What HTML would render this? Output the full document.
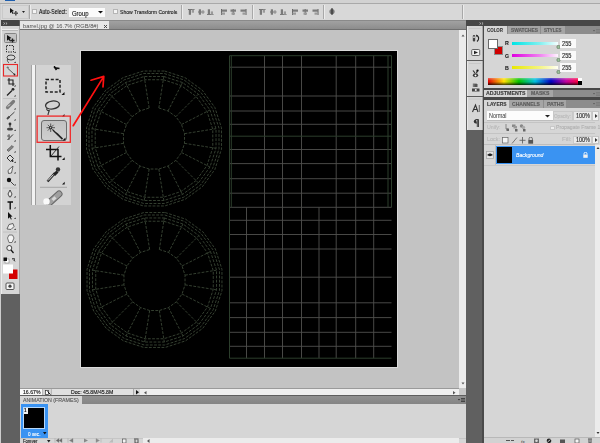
<!DOCTYPE html>
<html><head><meta charset="utf-8">
<style>
*{margin:0;padding:0;box-sizing:border-box}
html,body{width:600px;height:443px;overflow:hidden;background:#d5d5d5;font-family:"Liberation Sans",sans-serif;position:relative}
.a{position:absolute}
.t{position:absolute;white-space:nowrap;line-height:1;transform-origin:0 0;-webkit-text-stroke:0.12px currentColor}
</style></head><body>
<!-- top app bar -->
<div class="a" style="left:0;top:0;width:600px;height:3px;background:#d2d2d2"></div>
<div class="a" style="left:5px;top:0;width:10px;height:1px;background:#1f5fae"></div>
<div class="a" style="left:0;top:3px;width:600px;height:1px;background:#a9a9a9"></div>
<!-- options bar -->
<div class="a" style="left:0;top:4px;width:600px;height:16px;background:#d8d8d8;border-left:1px solid #b8c4cc"></div>
<div class="a" style="left:2px;top:5px;width:27px;height:14px;border:1px solid #c9c9c9"></div>
<svg class="a" style="left:9px;top:7px" width="11" height="10" viewBox="9 7 11 10"><path d="M10 8L14 11L12.3 11.6L13.5 13.6L12.6 14L11.5 12.1L10 13.3Z" fill="#111"/><path d="M15.8 11V15.5M13.5 13.2H18" stroke="#555" stroke-width="1.6"/></svg>
<svg class="a" style="left:22px;top:11px" width="4" height="3"><path d="M0 0H3L1.5 2Z" fill="#222"/></svg>
<div class="a" style="left:29px;top:5px;width:1px;height:14px;background:#a8a8a8"></div>
<div class="a" style="left:30px;top:5px;width:1px;height:14px;background:#ececec"></div>
<div class="a" style="left:32px;top:9px;width:5px;height:5px;background:#f4f4f4;border:1px solid #b5b5b5"></div>
<div class="a" style="left:69px;top:8px;width:36px;height:9px;background:#fbfbfb"></div>
<svg class="a" style="left:98px;top:11px" width="5" height="3"><path d="M0 0H5L2.5 2.6Z" fill="#111"/></svg>
<div class="a" style="left:113px;top:9px;width:5px;height:5px;background:#f4f4f4;border:1px solid #b5b5b5"></div>
<div class="a" style="left:181px;top:5px;width:1px;height:14px;background:#a8a8a8"></div>
<div class="a" style="left:182px;top:5px;width:1px;height:14px;background:#ececec"></div>
<div class="a" style="left:252px;top:5px;width:1px;height:14px;background:#a8a8a8"></div>
<div class="a" style="left:253px;top:5px;width:1px;height:14px;background:#ececec"></div>
<div class="a" style="left:323px;top:5px;width:1px;height:14px;background:#a8a8a8"></div>
<div class="a" style="left:324px;top:5px;width:1px;height:14px;background:#ececec"></div>
<div class="a" style="left:462px;top:5px;width:1px;height:14px;background:#a8a8a8"></div>
<div class="a" style="left:463px;top:5px;width:1px;height:14px;background:#ececec"></div>
<svg class="a" style="left:188px;top:8.5px" width="7" height="6.5" viewBox="0 0 7 6.5"><path d="M0 0.5H6.5" stroke="#666" stroke-width="0.9"/><rect x="0.8" y="0.5" width="2.2" height="5.3" fill="#7a7a7a"/><rect x="3.8" y="0.5" width="2.2" height="3.2" fill="#9a9a9a"/></svg>
<svg class="a" style="left:197.5px;top:8.5px" width="7" height="6.5" viewBox="0 0 7 6.5"><path d="M0 3H6.5" stroke="#666" stroke-width="0.9"/><rect x="0.8" y="0.3" width="2.2" height="5.4" fill="#7a7a7a"/><rect x="3.8" y="1.4" width="2.2" height="3.2" fill="#9a9a9a"/></svg>
<svg class="a" style="left:207px;top:8.5px" width="7" height="6.5" viewBox="0 0 7 6.5"><path d="M0 5.6H6.5" stroke="#666" stroke-width="0.9"/><rect x="0.8" y="0.3" width="2.2" height="5.3" fill="#7a7a7a"/><rect x="3.8" y="2.4" width="2.2" height="3.2" fill="#9a9a9a"/></svg>
<svg class="a" style="left:221px;top:8.5px" width="7" height="6.5" viewBox="0 0 7 6.5"><path d="M0.5 0V6" stroke="#555" stroke-width="0.9"/><rect x="0.5" y="0.5" width="5.5" height="2.2" fill="#7a7a7a"/><rect x="0.5" y="3.5" width="3.5" height="2.2" fill="#9a9a9a"/></svg>
<svg class="a" style="left:230px;top:8.5px" width="7" height="6.5" viewBox="0 0 7 6.5"><path d="M3.2 0V6" stroke="#555" stroke-width="0.9"/><rect x="0.5" y="0.5" width="5.5" height="2.2" fill="#7a7a7a"/><rect x="1.5" y="3.5" width="3.5" height="2.2" fill="#9a9a9a"/></svg>
<svg class="a" style="left:240px;top:8.5px" width="7" height="6.5" viewBox="0 0 7 6.5"><path d="M6 0V6" stroke="#555" stroke-width="0.9"/><rect x="0.5" y="0.5" width="5.5" height="2.2" fill="#7a7a7a"/><rect x="2.5" y="3.5" width="3.5" height="2.2" fill="#9a9a9a"/></svg>
<svg class="a" style="left:259px;top:8.5px" width="7" height="6.5" viewBox="0 0 7 6.5"><path d="M0 0.5H6.5" stroke="#666" stroke-width="0.9"/><rect x="0.8" y="0.5" width="2.2" height="5.3" fill="#7a7a7a"/><rect x="3.8" y="0.5" width="2.2" height="3.2" fill="#9a9a9a"/></svg>
<svg class="a" style="left:270px;top:8.5px" width="7" height="6.5" viewBox="0 0 7 6.5"><path d="M0 3H6.5" stroke="#666" stroke-width="0.9"/><rect x="0.8" y="0.3" width="2.2" height="5.4" fill="#7a7a7a"/><rect x="3.8" y="1.4" width="2.2" height="3.2" fill="#9a9a9a"/></svg>
<svg class="a" style="left:280px;top:8.5px" width="7" height="6.5" viewBox="0 0 7 6.5"><path d="M0 5.6H6.5" stroke="#666" stroke-width="0.9"/><rect x="0.8" y="0.3" width="2.2" height="5.3" fill="#7a7a7a"/><rect x="3.8" y="2.4" width="2.2" height="3.2" fill="#9a9a9a"/></svg>
<svg class="a" style="left:292px;top:8.5px" width="7" height="6.5" viewBox="0 0 7 6.5"><path d="M0.5 0V6" stroke="#555" stroke-width="0.9"/><rect x="0.5" y="0.5" width="5.5" height="2.2" fill="#7a7a7a"/><rect x="0.5" y="3.5" width="3.5" height="2.2" fill="#9a9a9a"/></svg>
<svg class="a" style="left:302px;top:8.5px" width="7" height="6.5" viewBox="0 0 7 6.5"><path d="M3.2 0V6" stroke="#555" stroke-width="0.9"/><rect x="0.5" y="0.5" width="5.5" height="2.2" fill="#7a7a7a"/><rect x="1.5" y="3.5" width="3.5" height="2.2" fill="#9a9a9a"/></svg>
<svg class="a" style="left:312px;top:8.5px" width="7" height="6.5" viewBox="0 0 7 6.5"><path d="M6 0V6" stroke="#555" stroke-width="0.9"/><rect x="0.5" y="0.5" width="5.5" height="2.2" fill="#7a7a7a"/><rect x="2.5" y="3.5" width="3.5" height="2.2" fill="#9a9a9a"/></svg>
<svg class="a" style="left:329px;top:8px" width="6" height="7" viewBox="0 0 6 7"><circle cx="3" cy="3.5" r="2.6" fill="#777"/><path d="M3 0V7" stroke="#222"/></svg>

<!-- tab bar -->
<div class="a" style="left:20px;top:20px;width:447px;height:10px;background:linear-gradient(#a4a4a4,#8a8a8a)"></div>
<div class="a" style="left:20px;top:20px;width:447px;height:1px;background:#8a8a8a"></div>
<div class="a" style="left:20px;top:20.5px;width:89px;height:8.5px;background:#e6e6e6"></div>
<div class="a" style="left:20px;top:29px;width:447px;height:1px;background:#707070"></div>

<!-- canvas -->
<div class="a" style="left:20px;top:30px;width:439px;height:358px;background:#c3c3c3"></div>
<div class="a" style="left:80px;top:50px;width:318px;height:318px;background:#dadada"></div>
<div class="a" style="left:81px;top:51px;width:316px;height:316px;background:#000"><svg width="316" height="316" viewBox="0 0 316 316" style="filter:blur(0.35px)"><style>.w{fill:none;stroke:#3a4636;stroke-width:0.9;stroke-dasharray:2.8 1.4}.g{stroke:#50504e;stroke-width:0.9}.s{stroke:#2c3e2c;stroke-width:1}</style><polygon points="83.68,20.04 104.01,26.64 121.3,39.2 133.86,56.49 140.46,76.82 140.46,98.18 133.86,118.51 121.3,135.8 104.01,148.36 83.68,154.96 62.32,154.96 41.99,148.36 24.7,135.8 12.14,118.51 5.54,98.18 5.54,76.82 12.14,56.49 24.7,39.2 41.99,26.64 62.32,20.04" class="w"/>
<polygon points="83.29,22.51 102.87,28.87 119.53,40.97 131.63,57.63 137.99,77.21 137.99,97.79 131.63,117.37 119.53,134.03 102.87,146.13 83.29,152.49 62.71,152.49 43.13,146.13 26.47,134.03 14.37,117.37 8.01,97.79 8.01,77.21 14.37,57.63 26.47,40.97 43.13,28.87 62.71,22.51" class="w"/>
<polygon points="82.82,25.47 101.51,31.54 117.41,43.09 128.96,58.99 135.03,77.68 135.03,97.32 128.96,116.01 117.41,131.91 101.51,143.46 82.82,149.53 63.18,149.53 44.49,143.46 28.59,131.91 17.04,116.01 10.97,97.32 10.97,77.68 17.04,58.99 28.59,43.09 44.49,31.54 63.18,25.47" class="w"/>
<polygon points="82.31,28.73 100.01,34.49 115.07,45.43 126.01,60.49 131.77,78.19 131.77,96.81 126.01,114.51 115.07,129.57 100.01,140.51 82.31,146.27 63.69,146.27 45.99,140.51 30.93,129.57 19.99,114.51 14.23,96.81 14.23,78.19 19.99,60.49 30.93,45.43 45.99,34.49 63.69,28.73" class="w"/>
<polyline points="77.83,56.98 87.03,59.97 94.85,65.65 100.53,73.47 103.52,82.67 103.52,92.33 100.53,101.53 94.85,109.35 87.03,115.03 77.83,118.02 68.17,118.02 58.97,115.03 51.15,109.35 45.47,101.53 42.48,92.33 42.48,82.67 45.47,73.47 51.15,65.65 58.97,59.97 68.17,56.98" class="w"/>
<line x1="77.83" y1="56.98" x2="82.82" y2="25.47" class="w"/>
<line x1="87.03" y1="59.97" x2="101.51" y2="31.54" class="w"/>
<line x1="94.85" y1="65.65" x2="117.41" y2="43.09" class="w"/>
<line x1="100.53" y1="73.47" x2="128.96" y2="58.99" class="w"/>
<line x1="103.52" y1="82.67" x2="135.03" y2="77.68" class="w"/>
<line x1="103.52" y1="92.33" x2="135.03" y2="97.32" class="w"/>
<line x1="100.53" y1="101.53" x2="128.96" y2="116.01" class="w"/>
<line x1="94.85" y1="109.35" x2="117.41" y2="131.91" class="w"/>
<line x1="87.03" y1="115.03" x2="101.51" y2="143.46" class="w"/>
<line x1="77.83" y1="118.02" x2="82.82" y2="149.53" class="w"/>
<line x1="68.17" y1="118.02" x2="63.18" y2="149.53" class="w"/>
<line x1="58.97" y1="115.03" x2="44.49" y2="143.46" class="w"/>
<line x1="51.15" y1="109.35" x2="28.59" y2="131.91" class="w"/>
<line x1="45.47" y1="101.53" x2="17.04" y2="116.01" class="w"/>
<line x1="42.48" y1="92.33" x2="10.97" y2="97.32" class="w"/>
<line x1="42.48" y1="82.67" x2="10.97" y2="77.68" class="w"/>
<line x1="45.47" y1="73.47" x2="17.04" y2="58.99" class="w"/>
<line x1="51.15" y1="65.65" x2="28.59" y2="43.09" class="w"/>
<line x1="58.97" y1="59.97" x2="44.49" y2="31.54" class="w"/>
<line x1="68.17" y1="56.98" x2="63.18" y2="25.47" class="w"/><polygon points="84.18,161.54 104.51,168.14 121.8,180.7 134.36,197.99 140.96,218.32 140.96,239.68 134.36,260.01 121.8,277.3 104.51,289.86 84.18,296.46 62.82,296.46 42.49,289.86 25.2,277.3 12.64,260.01 6.04,239.68 6.04,218.32 12.64,197.99 25.2,180.7 42.49,168.14 62.82,161.54" class="w"/>
<polygon points="83.79,164.01 103.37,170.37 120.03,182.47 132.13,199.13 138.49,218.71 138.49,239.29 132.13,258.87 120.03,275.53 103.37,287.63 83.79,293.99 63.21,293.99 43.63,287.63 26.97,275.53 14.87,258.87 8.51,239.29 8.51,218.71 14.87,199.13 26.97,182.47 43.63,170.37 63.21,164.01" class="w"/>
<polygon points="83.32,166.97 102.01,173.04 117.91,184.59 129.46,200.49 135.53,219.18 135.53,238.82 129.46,257.51 117.91,273.41 102.01,284.96 83.32,291.03 63.68,291.03 44.99,284.96 29.09,273.41 17.54,257.51 11.47,238.82 11.47,219.18 17.54,200.49 29.09,184.59 44.99,173.04 63.68,166.97" class="w"/>
<polygon points="82.81,170.23 100.51,175.99 115.57,186.93 126.51,201.99 132.27,219.69 132.27,238.31 126.51,256.01 115.57,271.07 100.51,282.01 82.81,287.77 64.19,287.77 46.49,282.01 31.43,271.07 20.49,256.01 14.73,238.31 14.73,219.69 20.49,201.99 31.43,186.93 46.49,175.99 64.19,170.23" class="w"/>
<polyline points="78.33,198.48 87.53,201.47 95.35,207.15 101.03,214.97 104.02,224.17 104.02,233.83 101.03,243.03 95.35,250.85 87.53,256.53 78.33,259.52 68.67,259.52 59.47,256.53 51.65,250.85 45.97,243.03 42.98,233.83 42.98,224.17 45.97,214.97 51.65,207.15 59.47,201.47 68.67,198.48" class="w"/>
<line x1="78.33" y1="198.48" x2="83.32" y2="166.97" class="w"/>
<line x1="87.53" y1="201.47" x2="102.01" y2="173.04" class="w"/>
<line x1="95.35" y1="207.15" x2="117.91" y2="184.59" class="w"/>
<line x1="101.03" y1="214.97" x2="129.46" y2="200.49" class="w"/>
<line x1="104.02" y1="224.17" x2="135.53" y2="219.18" class="w"/>
<line x1="104.02" y1="233.83" x2="135.53" y2="238.82" class="w"/>
<line x1="101.03" y1="243.03" x2="129.46" y2="257.51" class="w"/>
<line x1="95.35" y1="250.85" x2="117.91" y2="273.41" class="w"/>
<line x1="87.53" y1="256.53" x2="102.01" y2="284.96" class="w"/>
<line x1="78.33" y1="259.52" x2="83.32" y2="291.03" class="w"/>
<line x1="68.67" y1="259.52" x2="63.68" y2="291.03" class="w"/>
<line x1="59.47" y1="256.53" x2="44.99" y2="284.96" class="w"/>
<line x1="51.65" y1="250.85" x2="29.09" y2="273.41" class="w"/>
<line x1="45.97" y1="243.03" x2="17.54" y2="257.51" class="w"/>
<line x1="42.98" y1="233.83" x2="11.47" y2="238.82" class="w"/>
<line x1="42.98" y1="224.17" x2="11.47" y2="219.18" class="w"/>
<line x1="45.97" y1="214.97" x2="17.54" y2="200.49" class="w"/>
<line x1="51.65" y1="207.15" x2="29.09" y2="184.59" class="w"/>
<line x1="59.47" y1="201.47" x2="44.99" y2="173.04" class="w"/>
<line x1="68.67" y1="198.48" x2="63.68" y2="166.97" class="w"/><line x1="183.5" y1="4.7" x2="183.5" y2="156.3" class="g"/>
<line x1="201.5" y1="4.7" x2="201.5" y2="156.3" class="g"/>
<line x1="220.5" y1="4.7" x2="220.5" y2="156.3" class="g"/>
<line x1="255.2" y1="4.7" x2="255.2" y2="156.3" class="g"/>
<line x1="274.7" y1="4.7" x2="274.7" y2="156.3" class="g"/>
<line x1="292.7" y1="4.7" x2="292.7" y2="156.3" class="g"/>
<line x1="165.5" y1="156.3" x2="165.5" y2="307.2" class="g"/>
<line x1="183.5" y1="156.3" x2="183.5" y2="307.2" class="g"/>
<line x1="201.5" y1="156.3" x2="201.5" y2="307.2" class="g"/>
<line x1="220.5" y1="156.3" x2="220.5" y2="307.2" class="g"/>
<line x1="238" y1="156.3" x2="238" y2="307.2" class="g"/>
<line x1="255.2" y1="156.3" x2="255.2" y2="307.2" class="g"/>
<line x1="274.7" y1="156.3" x2="274.7" y2="307.2" class="g"/>
<line x1="292.7" y1="156.3" x2="292.7" y2="307.2" class="g"/>
<line x1="148.5" y1="16.2" x2="310.5" y2="16.2" class="g"/>
<line x1="148.5" y1="45" x2="310.5" y2="45" class="g"/>
<line x1="148.5" y1="60" x2="310.5" y2="60" class="g"/>
<line x1="148.5" y1="73.3" x2="310.5" y2="73.3" class="g"/>
<line x1="148.5" y1="98.5" x2="310.5" y2="98.5" class="g"/>
<line x1="148.5" y1="112.6" x2="310.5" y2="112.6" class="g"/>
<line x1="148.5" y1="127.7" x2="310.5" y2="127.7" class="g"/>
<line x1="148.5" y1="142.2" x2="310.5" y2="142.2" class="g"/>
<line x1="148.5" y1="169.3" x2="310.5" y2="169.3" class="g"/>
<line x1="148.5" y1="183.5" x2="310.5" y2="183.5" class="g"/>
<line x1="148.5" y1="198" x2="310.5" y2="198" class="g"/>
<line x1="148.5" y1="226.2" x2="310.5" y2="226.2" class="g"/>
<line x1="148.5" y1="251.8" x2="310.5" y2="251.8" class="g"/>
<line x1="148.5" y1="266.6" x2="310.5" y2="266.6" class="g"/>
<line x1="148.5" y1="281.3" x2="310.5" y2="281.3" class="g"/>
<line x1="148.5" y1="295.3" x2="310.5" y2="295.3" class="g"/>
<line x1="148.5" y1="4.7" x2="310.5" y2="4.7" class="s"/>
<line x1="148.5" y1="85.2" x2="310.5" y2="85.2" class="s"/>
<line x1="148.5" y1="307.2" x2="310.5" y2="307.2" class="s"/>
<line x1="148.5" y1="156.3" x2="310.5" y2="156.3" class="g"/>
<line x1="150.3" y1="4.7" x2="150.3" y2="156.3" class="s"/>
<line x1="307" y1="4.7" x2="307" y2="156.3" class="s"/>
<line x1="310.5" y1="4.7" x2="310.5" y2="156.3" class="s"/>
<line x1="148.5" y1="4.7" x2="148.5" y2="307.2" class="s"/></svg></div>
<!-- v scrollbar -->
<div class="a" style="left:459px;top:30px;width:7px;height:358px;background:#ececec"></div>
<!-- status bar -->
<div class="a" style="left:20px;top:388px;width:446px;height:7px;background:#dadada"></div>
<div class="a" style="left:140px;top:388px;width:319px;height:7px;background:#ececec"></div>

<!-- left toolbar -->
<div class="a" style="left:0;top:20px;width:20px;height:423px;background:#606060"></div>
<div class="a" style="left:0;top:4px;width:1px;height:439px;background:#cdcdcd"></div>
<div class="a" style="left:1px;top:20px;width:18px;height:6px;background:#454545"></div>
<svg class="a" style="left:3px;top:21.5px" width="5" height="3"><path d="M0.5 0.5L1.8 1.5L0.5 2.5M2.8 0.5L4.1 1.5L2.8 2.5" stroke="#ddd" stroke-width="0.7" fill="none"/></svg>
<div class="a" style="left:1px;top:26px;width:18px;height:268px;background:#d6d6d6"></div>

<!-- animation panel -->
<div class="a" style="left:20px;top:395px;width:446px;height:9px;background:linear-gradient(#929292,#848484)"></div>
<div class="a" style="left:20px;top:395px;width:62px;height:9px;background:#d6d6d6"></div>
<div class="a" style="left:20px;top:404px;width:446px;height:39px;background:#d6d6d6"></div>

<!-- right dark column -->
<div class="a" style="left:466px;top:20px;width:18px;height:423px;background:#606060"></div>
<div class="a" style="left:466px;top:20px;width:134px;height:6px;background:#474747"></div>
<div class="a" style="left:467px;top:26px;width:16px;height:34px;background:#d6d6d6"></div>
<div class="a" style="left:467px;top:61px;width:16px;height:35px;background:#d6d6d6"></div>
<div class="a" style="left:467px;top:97px;width:16px;height:33px;background:#d6d6d6"></div>

<!-- color panel -->
<div class="a" style="left:484px;top:26px;width:116px;height:8px;background:#8c8c8c"></div>
<div class="a" style="left:484px;top:26px;width:23px;height:8px;background:#d6d6d6"></div>
<div class="a" style="left:507px;top:26px;width:58px;height:8px;background:#a5a5a5"></div>
<div class="a" style="left:484px;top:34px;width:116px;height:54px;background:#d6d6d6"></div>
<div class="a" style="left:484px;top:88px;width:116px;height:2px;background:#474747"></div>
<!-- adjustments -->
<div class="a" style="left:484px;top:90px;width:116px;height:7px;background:#8c8c8c"></div>
<div class="a" style="left:484px;top:90px;width:43px;height:7px;background:#d6d6d6"></div>
<div class="a" style="left:527px;top:90px;width:26px;height:7px;background:#a5a5a5"></div>
<div class="a" style="left:484px;top:97px;width:116px;height:3px;background:#474747"></div>
<!-- layers -->
<div class="a" style="left:484px;top:100px;width:116px;height:8px;background:#8c8c8c"></div>
<div class="a" style="left:484px;top:100px;width:25px;height:8px;background:#d6d6d6"></div>
<div class="a" style="left:509px;top:100px;width:57px;height:8px;background:#a5a5a5"></div>
<div class="a" style="left:484px;top:108px;width:116px;height:335px;background:#d6d6d6"></div>
<div class="a" style="left:496px;top:146px;width:99px;height:18px;background:#3a93f2"></div>
<div class="a" style="left:497px;top:147px;width:15px;height:16px;background:#000"></div>
<div class="a" style="left:595px;top:145px;width:5px;height:292px;background:#ececec"></div>


<!-- color panel contents -->
<div class="a" style="left:494px;top:46px;width:9px;height:9px;background:#d00000;border:1px solid #8a8a8a"></div>
<div class="a" style="left:488px;top:38.5px;width:10px;height:10px;background:#fff;border:1px solid #6a6a6a"></div>
<div class="a" style="left:512px;top:41.5px;width:46px;height:3px;background:linear-gradient(90deg,#00e5e5,#7ff0f0 60%,#f4ffff)"></div>
<div class="a" style="left:512px;top:54px;width:46px;height:3px;background:linear-gradient(90deg,#e000e0,#f080f0 60%,#fff4ff)"></div>
<div class="a" style="left:512px;top:66px;width:46px;height:3px;background:linear-gradient(90deg,#e8e800,#f4f480 60%,#fffff4)"></div>
<svg class="a" style="left:555.5px;top:45px" width="5" height="4"><circle cx="2.5" cy="2" r="1.7" fill="#9cc09c" stroke="#587058" stroke-width="0.6"/></svg>
<svg class="a" style="left:555.5px;top:57.5px" width="5" height="4"><circle cx="2.5" cy="2" r="1.7" fill="#9cc09c" stroke="#587058" stroke-width="0.6"/></svg>
<svg class="a" style="left:555.5px;top:69.5px" width="5" height="4"><circle cx="2.5" cy="2" r="1.7" fill="#9cc09c" stroke="#587058" stroke-width="0.6"/></svg>
<div class="a" style="left:560px;top:39px;width:16px;height:9px;background:#fafafa"></div>
<div class="a" style="left:560px;top:51px;width:16px;height:9px;background:#fafafa"></div>
<div class="a" style="left:560px;top:63px;width:16px;height:9px;background:#fafafa"></div>
<div class="a" style="left:488px;top:78px;width:94px;height:7px;background:linear-gradient(#fff0 0,#fff0 100%),linear-gradient(90deg,#e00000 0%,#ffe000 17%,#00c000 33%,#00c0e0 50%,#0000c0 67%,#c000a0 83%,#ff0040 96%,#ff0000 100%)"></div>
<div class="a" style="left:488px;top:78px;width:90px;height:7px;background:linear-gradient(rgba(255,255,255,0.35),rgba(0,0,0,0) 40%,rgba(0,0,0,0) 55%,rgba(0,0,0,0.75))"></div>
<div class="a" style="left:578px;top:78px;width:4px;height:3px;background:#fff"></div>
<div class="a" style="left:578px;top:81px;width:4px;height:4px;background:#000"></div>
<svg class="a" style="left:593px;top:29px" width="7" height="5"><path d="M0 1H2L1 2.5Z" fill="#555"/><path d="M3 0.5H7M3 2H7M3 3.5H7" stroke="#777" stroke-width="0.7"/></svg>
<svg class="a" style="left:593px;top:92px" width="7" height="5"><path d="M0 1H2L1 2.5Z" fill="#555"/><path d="M3 0.5H7M3 2H7M3 3.5H7" stroke="#777" stroke-width="0.7"/></svg>
<svg class="a" style="left:593px;top:102px" width="7" height="5"><path d="M0 1H2L1 2.5Z" fill="#555"/><path d="M3 0.5H7M3 2H7M3 3.5H7" stroke="#777" stroke-width="0.7"/></svg>
<div class="a" style="left:507px;top:26px;width:1px;height:8px;background:#8c8c8c"></div>
<div class="a" style="left:540px;top:26px;width:1px;height:8px;background:#8c8c8c"></div>
<div class="a" style="left:543px;top:100px;width:1px;height:8px;background:#8c8c8c"></div>
<div class="a" style="left:482px;top:26px;width:2px;height:417px;background:#4a4a4a"></div>

<!-- layers controls -->
<div class="a" style="left:486.5px;top:111px;width:66px;height:9.5px;background:#fcfcfc;border-bottom:1px solid #bdbdbd"></div>
<svg class="a" style="left:545px;top:114.5px" width="5" height="3"><path d="M0 0H5L2.5 2.5Z" fill="#222"/></svg>
<div class="a" style="left:552.5px;top:111px;width:20px;height:9.5px;border:1px solid #c8c8c8"></div>
<div class="a" style="left:573px;top:111px;width:18.5px;height:9.5px;background:#e9e9e9;border:1px solid #cacaca"></div>
<div class="a" style="left:592px;top:111px;width:7px;height:9.5px;background:#f2f2f2;border:1px solid #c6c6c6"></div>
<svg class="a" style="left:594.5px;top:114px" width="3" height="4"><path d="M0 0V4L2.5 2Z" fill="#333"/></svg>
<div class="a" style="left:484px;top:122px;width:111px;height:1px;background:#c4c4c4"></div>
<div class="a" style="left:484px;top:133px;width:111px;height:1px;background:#c4c4c4"></div>
<div class="a" style="left:484px;top:144px;width:111px;height:1px;background:#bdbdbd"></div>
<div class="a" style="left:484px;top:165px;width:111px;height:1px;background:#c8c8c8"></div>
<div class="a" style="left:495px;top:145px;width:1px;height:20px;background:#c0c0c0"></div>
<div class="a" style="left:573px;top:135.5px;width:18.5px;height:8px;background:#e9e9e9;border:1px solid #cacaca"></div>
<div class="a" style="left:592px;top:135.5px;width:7px;height:8px;background:#f2f2f2;border:1px solid #c6c6c6"></div>
<svg class="a" style="left:594.5px;top:138px" width="3" height="4"><path d="M0 0V4L2.5 2Z" fill="#333"/></svg>
<div class="a" style="left:550px;top:125.5px;width:5px;height:4.5px;background:#eee;border:1px solid #c8c8c8"></div>
<svg class="a" style="left:504px;top:123px" width="24" height="9" viewBox="0 0 24 9"><path d="M2 1V6H4" stroke="#777" stroke-width="0.8" fill="none"/><rect x="2.5" y="5.5" width="2.5" height="2.5" fill="#666"/><rect x="8" y="1.5" width="3.5" height="2.5" fill="#888"/><rect x="9.5" y="3" width="3.5" height="2.5" fill="#999"/><rect x="11" y="6" width="2.5" height="2.5" fill="#666"/><circle cx="17.5" cy="3" r="1.7" fill="#888"/><circle cx="19.5" cy="4.5" r="1.7" fill="#aaa"/><rect x="19" y="6" width="2.5" height="2.5" fill="#666"/></svg>
<svg class="a" style="left:502px;top:136.5px" width="32" height="7" viewBox="0 0 32 7"><rect x="0.5" y="0.5" width="5.5" height="5.5" fill="#f4f4f4" stroke="#666" stroke-width="0.7"/><path d="M10 6.5L15 0.5" stroke="#777" stroke-width="1"/><path d="M20.5 0V6.5M17.5 3.3H23.5" stroke="#555" stroke-width="0.8"/><path d="M27 3V1.8A1.7 1.7 0 0 1 30.4 1.8V3" stroke="#555" fill="none" stroke-width="0.8"/><rect x="26.3" y="3" width="4.8" height="3.7" fill="#555"/></svg>
<svg class="a" style="left:486px;top:150.5px" width="8" height="8" viewBox="0 0 8 8"><rect x="0.5" y="0.5" width="7" height="7" fill="#e4e4e4" stroke="#a8a8a8" stroke-width="0.8"/><path d="M1.3 4C2.5 2 5.5 2 6.7 4C5.5 5.5 2.5 5.5 1.3 4Z" fill="#222"/></svg>
<svg class="a" style="left:582.5px;top:152px" width="5" height="6" viewBox="0 0 5 6"><path d="M1 2.5V1.8A1.5 1.5 0 0 1 4 1.8V2.5" stroke="#fff" fill="none" stroke-width="0.9"/><rect x="0.3" y="2.5" width="4.4" height="3.3" fill="#f0f0f0"/></svg>
<svg class="a" style="left:596px;top:146px" width="4" height="4"><path d="M0.5 3H3.5L2 1Z" fill="#333"/></svg>
<svg class="a" style="left:596px;top:431px" width="4" height="4"><path d="M0.5 1H3.5L2 3Z" fill="#333"/></svg>
<!-- layers bottom bar -->
<div class="a" style="left:484px;top:436.5px;width:116px;height:1px;background:#b8b8b8"></div>
<div class="a" style="left:484px;top:437.5px;width:116px;height:6px;background:#d2d2d2"></div>
<svg class="a" style="left:505px;top:438px" width="95" height="5" viewBox="0 0 95 5"><path d="M1 2.5H5M6 2.5H9" stroke="#555" stroke-width="1.2"/><text x="16" y="5" font-size="5" font-family="Liberation Serif" font-style="italic" fill="#333">fx</text><rect x="29" y="0.5" width="5" height="4.5" fill="#666"/><circle cx="31.5" cy="2.8" r="1.3" fill="#ddd"/><circle cx="44" cy="2.8" r="2.3" fill="#222"/><path d="M42.5 4L45.5 1.5" stroke="#eee" stroke-width="0.8"/><rect x="55" y="1.5" width="5" height="3.5" fill="#555"/><rect x="70" y="1" width="4" height="4" fill="#f4f4f4" stroke="#555" stroke-width="0.7"/><path d="M83 1H87M84 1.5V5H86V1.5" stroke="#444" stroke-width="0.9" fill="none"/></svg>

<!-- frame thumbnail -->
<div class="a" style="left:20.5px;top:404px;width:27px;height:34px;background:#3a93f2"></div>
<div class="a" style="left:23px;top:407px;width:21.5px;height:22px;background:#000;border:1px solid #b8d8f8"></div>
<div class="a" style="left:23.5px;top:407.5px;width:4px;height:6px;background:#f2f2f2"></div>
<svg class="a" style="left:42.5px;top:431.5px" width="4" height="3"><path d="M0 0H3.5L1.75 2.5Z" fill="#111"/></svg>
<svg class="a" style="left:47px;top:439.5px" width="4" height="3"><path d="M0 0H3.5L1.75 2.5Z" fill="#222"/></svg>
<div class="a" style="left:20px;top:437.5px;width:446px;height:1px;background:#c6c6c6"></div>
<svg class="a" style="left:54px;top:438px" width="90" height="5" viewBox="0 0 90 5"><path d="M1 0.5V4.5M5 0.5L2 2.5L5 4.5ZM8 0.5L5 2.5L8 4.5Z" fill="#666" stroke="#888" stroke-width="0.4"/><path d="M14 0.5V4.5M19 0.5L15.5 2.5L19 4.5Z" fill="#777" stroke="#888" stroke-width="0.4"/><path d="M30 0.5L34 2.5L30 4.5Z" fill="#888"/><path d="M42 0.5L45.5 2.5L42 4.5ZM47 0.5V4.5" fill="#888" stroke="#999" stroke-width="0.4"/><path d="M55 4.5L59 0.5L59 4.5Z" fill="#bbb"/><rect x="68.5" y="1" width="3.5" height="4" fill="#f4f4f4" stroke="#444" stroke-width="0.6"/><path d="M80 1H84.5M81 1.5V5H84V1.5" stroke="#444" stroke-width="0.9" fill="none"/></svg>
<div class="a" style="left:143px;top:438px;width:316px;height:5px;background:#ececec"></div>
<svg class="a" style="left:147px;top:439px" width="3" height="4"><path d="M2.5 0V4L0 2Z" fill="#555"/></svg>
<svg class="a" style="left:458px;top:398px" width="7" height="4"><path d="M0 1H2L1 2.5Z" fill="#222"/><path d="M3 0.5H7M3 2H7M3 3.5H7" stroke="#333" stroke-width="0.8"/></svg>

<!-- status bar contents -->
<div class="a" style="left:20px;top:388px;width:446px;height:1px;background:#9a9a9a"></div>
<div class="a" style="left:20px;top:389px;width:22px;height:6px;background:#fafafa"></div>
<div class="a" style="left:42px;top:389px;width:10px;height:6px;background:#d4d4d4;border-left:1px solid #b8b8b8;border-right:1px solid #b8b8b8"></div>
<svg class="a" style="left:44.5px;top:389.5px" width="6" height="5" viewBox="0 0 6 5"><rect x="0.5" y="0.5" width="3" height="4" fill="#fff" stroke="#333" stroke-width="0.7"/><path d="M2.5 1.5L5.5 4.5" stroke="#111" stroke-width="1"/></svg>
<div class="a" style="left:52px;top:389px;width:81px;height:6px;background:#e0e0e0"></div>
<div class="a" style="left:133px;top:389px;width:7px;height:6px;background:#d8d8d8;border-left:1px solid #aaa"></div>
<svg class="a" style="left:135.5px;top:390px" width="4" height="5"><path d="M0 0V4.5L3 2.25Z" fill="#111"/></svg>
<div class="a" style="left:140px;top:389px;width:319px;height:6px;background:#efefef"></div>
<svg class="a" style="left:143.5px;top:390.5px" width="3" height="4"><path d="M2.5 0V3.5L0 1.75Z" fill="#555"/></svg>
<svg class="a" style="left:452.5px;top:390.5px" width="3" height="4"><path d="M0 0V3.5L2.5 1.75Z" fill="#555"/></svg>
<div class="a" style="left:459px;top:388px;width:7px;height:7px;background:#c8c8c8"></div>
<div class="a" style="left:20px;top:395px;width:446px;height:1px;background:#5e5e5e"></div>
<svg class="a" style="left:461px;top:34px" width="4" height="3"><path d="M0.5 2.5H3.5L2 0.5Z" fill="#555"/></svg>
<svg class="a" style="left:461px;top:381.5px" width="4" height="3"><path d="M0.5 0.5H3.5L2 2.5Z" fill="#555"/></svg>

<!-- toolbar icons -->
<div class="a" style="left:1px;top:26px;width:1px;height:268px;background:#ececec"></div>
<div class="a" style="left:18.5px;top:26px;width:1px;height:268px;background:#a6a6a6"></div>
<div class="a" style="left:2px;top:29px;width:16px;height:1px;background:#f0f0f0"></div>
<div class="a" style="left:2px;top:30px;width:16px;height:1px;background:#b8b8b8"></div>
<div class="a" style="left:4px;top:32.5px;width:12.5px;height:10.5px;background:#c3c3c3;border:1px solid #858585;border-radius:1.5px"></div>
<svg class="a" style="left:0;top:26px" width="20" height="268" viewBox="0 26 20 268">
<path d="M7 35L11.5 38L9.6 38.8L11 41L10 41.5L8.6 39.4L7 40.8Z" fill="#111"/>
<path d="M12.5 38.5V42.5M10.5 40.5H14.5" stroke="#222" stroke-width="1.3"/>
<rect x="6.5" y="45.5" width="7" height="6.5" fill="none" stroke="#222" stroke-width="0.9" stroke-dasharray="1.5 1"/>
<path d="M14 53.1L15.6 51.5V53.1Z" fill="#111"/>
<ellipse cx="11" cy="57.5" rx="4" ry="2.5" fill="none" stroke="#333" stroke-width="0.9"/>
<path d="M7.5 59C7 61 8 62 9 63" stroke="#333" stroke-width="0.8" fill="none"/>
<path d="M14 63.1L15.6 61.5V63.1Z" fill="#111"/>
<rect x="3.5" y="64.5" width="14" height="11.5" fill="none" stroke="#e82828" stroke-width="1.1"/>
<path d="M8 68.5L14.5 74.5" stroke="#555" stroke-width="1"/><circle cx="14.5" cy="74.5" r="0.9" fill="#222"/>
<path d="M6.5 67.5H9M7.7 66.3V68.7" stroke="#555" stroke-width="0.6"/>
<path d="M9 78V84H14.5M7.5 80H13V86" stroke="#222" stroke-width="1.1" fill="none"/>
<path d="M14 86.6L15.6 85V86.6Z" fill="#111"/>
<path d="M7 95.5L12 90.5" stroke="#222" stroke-width="1.3"/><circle cx="13" cy="89.3" r="1.4" fill="#222"/>
<path d="M14 96.6L15.6 95V96.6Z" fill="#111"/>
<path d="M3 98.5H17" stroke="#bdbdbd" stroke-width="0.8"/>
<path d="M7.5 107.5L13.5 101.5" stroke="#7a7a7a" stroke-width="3.2" stroke-linecap="round"/><path d="M8 106.5L10 104.5" stroke="#eee" stroke-width="1"/>
<path d="M14 109.6L15.6 108V109.6Z" fill="#111"/>
<path d="M7.5 118.5L14.5 112" stroke="#333" stroke-width="0.9"/><path d="M7 119L9.5 116.5" stroke="#444" stroke-width="1.8"/>
<path d="M14 120.6L15.6 119V120.6Z" fill="#111"/>
<circle cx="10" cy="124" r="1.4" fill="#333"/><path d="M10 125V127" stroke="#333"/><ellipse cx="10" cy="129" rx="3" ry="1.6" fill="#444"/>
<path d="M14 131.1L15.6 129.5V131.1Z" fill="#111"/>
<path d="M7.5 140L13 134.5" stroke="#333" stroke-width="1"/><path d="M7 136H10M9 134V140" stroke="#444" stroke-width="0.8"/>
<path d="M14 141.6L15.6 140V141.6Z" fill="#111"/>
<path d="M7 150L12 145.5L13.5 147L8.5 151.5Z" fill="#888" stroke="#444" stroke-width="0.6"/>
<path d="M14 152.6L15.6 151V152.6Z" fill="#111"/>
<path d="M7 158L10 155L13.5 158.5L10.5 161.5Z" fill="#ddd" stroke="#222" stroke-width="0.9"/><circle cx="12.5" cy="161" r="1" fill="#222"/>
<path d="M14 163.1L15.6 161.5V163.1Z" fill="#111"/>
<path d="M13 166L8 170.5L8.5 173.5L11.5 173Z" fill="#eee" stroke="#444" stroke-width="0.8"/>
<path d="M14 173.6L15.6 172V173.6Z" fill="#111"/>
<circle cx="9" cy="180" r="2.2" fill="#111"/><path d="M10.5 181.5L14 185" stroke="#333" stroke-width="0.9"/>
<path d="M14 185.6L15.6 184V185.6Z" fill="#111"/>
<path d="M3 188H17" stroke="#bdbdbd" stroke-width="0.8"/>
<path d="M10 190L12 194L10.5 197H9.5L8 194Z" fill="#eee" stroke="#222" stroke-width="0.8"/>
<path d="M14 197.6L15.6 196V197.6Z" fill="#111"/>
<path d="M7.5 202H13M10.2 202V209.5" stroke="#111" stroke-width="1.4"/>
<path d="M14 208.6L15.6 207V208.6Z" fill="#111"/>
<path d="M8 212L12.5 216.5L10.6 216.8L11.8 219.2L10.9 219.6L9.8 217.2L8 218.8Z" fill="#111"/>
<path d="M14 219.1L15.6 217.5V219.1Z" fill="#111"/>
<path d="M7 229L9 224.5L13 223.5L14 226.5L11 229.5Z" fill="#eee" stroke="#444" stroke-width="0.8"/>
<path d="M14 230.1L15.6 228.5V230.1Z" fill="#111"/>
<path d="M3 232H17" stroke="#bdbdbd" stroke-width="0.8"/>
<path d="M7.5 238L9 235H12.5L14 238L12 242.5H9Z" fill="#f4f4f4" stroke="#555" stroke-width="0.8"/>
<path d="M14 242.6L15.6 241V242.6Z" fill="#111"/>
<circle cx="9.3" cy="248" r="2.5" fill="#f4f4f4" stroke="#333" stroke-width="0.9"/><path d="M11 250L13.5 253" stroke="#111" stroke-width="1.2"/>
<rect x="5" y="259" width="4" height="4" fill="#fff" stroke="#777" stroke-width="0.5"/><rect x="3.5" y="257.5" width="3.5" height="3.5" fill="#111"/>
<path d="M12 258.5H14.5V261M12.5 259L15 261.5" stroke="#333" stroke-width="0.8" fill="none"/>
<rect x="9" y="269.5" width="8.5" height="9.5" fill="#d40000"/>
<rect x="3" y="264.5" width="10" height="9" fill="#fff"/>
<rect x="6" y="283" width="8" height="6.5" rx="1" fill="#f6f6f6" stroke="#444" stroke-width="0.9"/><circle cx="10" cy="286.2" r="1.6" fill="#444"/>
</svg>

<!-- inset -->
<div class="a" style="left:31px;top:65px;width:40px;height:140px;background:#d3d3d3"></div>
<div class="a" style="left:31px;top:65px;width:1px;height:140px;background:#a4a4a4"></div>
<div class="a" style="left:32px;top:65px;width:3px;height:140px;background:#f2f2f2"></div>
<div class="a" style="left:35px;top:65px;width:1px;height:140px;background:#9c9c9c"></div>
<div class="a" style="left:41px;top:119.5px;width:26px;height:21.5px;border:1.3px solid #6c6c6c;border-radius:3px;background:linear-gradient(#c2c2c2,#cfcfcf)"></div>
<svg class="a" style="left:31px;top:65px" width="50" height="140" viewBox="31 65 50 140">
<path d="M54 66.5L57 68.5L56 69.5ZM56.5 68L59.5 68.5" stroke="#111" stroke-width="1.4" fill="#111"/>
<rect x="46" y="79.5" width="14" height="12.5" fill="none" stroke="#222" stroke-width="1.5" stroke-dasharray="3 1.8"/>
<path d="M61.5 95L64.5 92V95Z" fill="#111"/>
<ellipse cx="52.5" cy="105" rx="7" ry="4" transform="rotate(-8 52.5 105)" fill="none" stroke="#333" stroke-width="1.3"/>
<path d="M47 108C46 110 48 111 49 110.5C50 110 48 113 48 115" stroke="#333" stroke-width="1.1" fill="none"/>
<path d="M62 116.5L64.5 114V116.5Z" fill="#111"/>
<rect x="37.1" y="116.1" width="33.2" height="26.2" fill="none" stroke="#f02828" stroke-width="1.3"/>
<path d="M46.5 127.7H55M50.7 123.5V132M47.8 124.8L53.6 130.6M53.6 124.8L47.8 130.6" stroke="#3a3a3a" stroke-width="0.8"/>
<circle cx="50.7" cy="127.7" r="1.5" fill="#222"/><circle cx="50.7" cy="127.7" r="0.6" fill="#eee"/>
<path d="M53 129.8L62.5 139.2" stroke="#222" stroke-width="1.7"/>
<path d="M54 129.5L57 132.5" stroke="#f4f4f4" stroke-width="0.8"/>
<path d="M62.5 140.5L65.5 137.5V140.5Z" fill="#111"/>
<path d="M50.3 145V156.5H61.5M46 149.5H58V160.5" stroke="#111" stroke-width="1.5" fill="none"/>
<path d="M51 156L59 146.5" stroke="#222" stroke-width="0.9"/>
<path d="M62 160L64.7 157.3V160Z" fill="#111"/>
<path d="M47.5 181.5L55 173" stroke="#222" stroke-width="2.4"/><path d="M48 180.5L54 174" stroke="#f4f4f4" stroke-width="0.9"/>
<path d="M54 175L57.5 171.5" stroke="#222" stroke-width="3"/><circle cx="58" cy="169.5" r="2.2" fill="#333"/>
<path d="M62 184.5L64.7 181.8V184.5Z" fill="#111"/>
<path d="M40 187.3H67" stroke="#9a9a9a" stroke-width="0.8"/>
<path d="M49 203L59 194" stroke="#666" stroke-width="7" stroke-linecap="round"/><path d="M49 203L59 194" stroke="#a0a0a0" stroke-width="5" stroke-linecap="round"/>
<path d="M52.5 200L55.5 197.3" stroke="#d8d8d8" stroke-width="3"/>
<circle cx="46.5" cy="201.5" r="3.2" fill="#fafafa"/>
</svg>
<!-- red arrow -->
<svg class="a" style="left:60px;top:60px" width="60" height="80" viewBox="60 60 60 80">
<path d="M73.2 125.7L103.8 76.4M91 80.2L103.8 76.4L103 86.9" stroke="#ff1010" stroke-width="1.7" fill="none" stroke-linecap="round" stroke-linejoin="round"/>
</svg>

<!-- icon column -->
<div class="a" style="left:482px;top:26px;width:1px;height:104px;background:#a8a8a8"></div>
<div class="a" style="left:467px;top:26px;width:1px;height:104px;background:#e8e8e8"></div>
<div class="a" style="left:467px;top:60px;width:16px;height:1px;background:#5b5b5b"></div>
<div class="a" style="left:467px;top:96px;width:16px;height:1px;background:#5b5b5b"></div>
<svg class="a" style="left:466px;top:26px" width="18" height="104" viewBox="466 26 18 104">
<path d="M469 28.5H481M469 63.5H481M469 99H481" stroke="#c4c4c4" stroke-width="0.8"/>
<rect x="472.8" y="35" width="2.4" height="6.5" rx="1" fill="#444"/><rect x="473.3" y="36.5" width="1.4" height="1.5" fill="#eee"/>
<path d="M476.5 35.5C479 36 479.5 39.5 477 41.5" stroke="#222" stroke-width="1.2" fill="none"/><path d="M476 34.5L478 35.5L476.5 37Z" fill="#222"/>
<rect x="471.7" y="49.5" width="8" height="6" rx="1" fill="#f0f0f0" stroke="#555" stroke-width="0.9"/><path d="M474 50.8L478 52.5L474 54.3Z" fill="#222"/>
<path d="M473 70.5L475 73M477.5 70L476.5 73" stroke="#333" stroke-width="1.2"/><circle cx="477.6" cy="70.6" r="1.1" fill="#111"/><ellipse cx="475.5" cy="75.3" rx="2.6" ry="2" fill="#333"/><circle cx="475.5" cy="75.5" r="1" fill="#fff"/>
<rect x="472.8" y="83.5" width="4" height="3.5" fill="#777"/><rect x="474.5" y="84" width="3" height="3" fill="#555"/><path d="M472 88.5H479.5V91.5H472Z" fill="#444"/><circle cx="475.8" cy="90" r="1" fill="#eee"/>
<path d="M472.5 112L475.5 105L478 112M473.5 109.5H477" stroke="#333" stroke-width="1.1" fill="none"/><path d="M479.3 105V112" stroke="#333" stroke-width="0.7"/>
<path d="M475.5 119.5H478.5V127M477.3 119.5V127" stroke="#333" stroke-width="0.9" fill="none"/><path d="M475.8 119.5A2 2 0 0 0 475.8 123.5H477Z" fill="#333"/>
</svg>

<svg class="a" style="left:102.5px;top:23.5px" width="5" height="5"><path d="M1 1L4 4M4 1L1 4" stroke="#3a3a3a" stroke-width="0.9"/></svg>
<svg class="a" style="left:478.5px;top:21.5px" width="5" height="3"><path d="M0.5 0.3L1.8 1.5L0.5 2.7M2.8 0.3L4.1 1.5L2.8 2.7" stroke="#ddd" stroke-width="0.7" fill="none"/></svg>
<div class="t" style="left:39.00px;top:9.26px;font-size:6.31px;color:#111;transform:scaleX(0.815);">Auto-Select:</div>
<div class="t" style="left:72.00px;top:10.69px;font-size:6.86px;color:#111;transform:scaleX(0.866);">Group</div>
<div class="t" style="left:119.50px;top:9.17px;font-size:6.17px;color:#1a1a1a;transform:scaleX(0.826);">Show Transform Controls</div>
<div class="t" style="left:23.00px;top:23.09px;font-size:6.04px;color:#505050;transform:scaleX(0.957);-webkit-text-stroke:0;">barrel.jpg @ 16.7% (RGB/8#)</div>
<div class="t" style="left:22.50px;top:390.36px;font-size:5.49px;color:#111;transform:scaleX(0.940);">16.67%</div>
<div class="t" style="left:71.00px;top:390.37px;font-size:5.35px;color:#111;transform:scaleX(0.968);">Doc: 45.8M/45.8M</div>
<div class="t" style="left:23.00px;top:398.06px;font-size:5.49px;color:#555;transform:scaleX(0.958);">ANIMATION (FRAMES)</div>
<div class="t" style="left:487.00px;top:29.04px;font-size:4.80px;color:#3a3a3a;transform:scaleX(0.923);font-weight:bold;">COLOR</div>
<div class="t" style="left:510.50px;top:29.17px;font-size:4.53px;color:#5a5a5a;transform:scaleX(1.066);font-weight:bold;">SWATCHES</div>
<div class="t" style="left:544.00px;top:29.17px;font-size:4.53px;color:#5a5a5a;transform:scaleX(0.994);font-weight:bold;">STYLES</div>
<div class="t" style="left:505.00px;top:41.32px;font-size:5.76px;color:#222;transform:scaleX(0.913);font-weight:bold;">R</div>
<div class="t" style="left:505.00px;top:53.82px;font-size:5.76px;color:#222;transform:scaleX(0.892);font-weight:bold;">G</div>
<div class="t" style="left:505.00px;top:65.82px;font-size:5.76px;color:#222;transform:scaleX(0.913);font-weight:bold;">B</div>
<div class="t" style="left:562.00px;top:40.76px;font-size:6.31px;color:#222;transform:scaleX(0.902);">255</div>
<div class="t" style="left:562.00px;top:52.76px;font-size:6.31px;color:#222;transform:scaleX(0.902);">255</div>
<div class="t" style="left:562.00px;top:64.76px;font-size:6.31px;color:#222;transform:scaleX(0.902);">255</div>
<div class="t" style="left:486.00px;top:92.44px;font-size:4.80px;color:#3a3a3a;transform:scaleX(1.097);font-weight:bold;">ADJUSTMENTS</div>
<div class="t" style="left:531.00px;top:92.44px;font-size:4.80px;color:#5a5a5a;transform:scaleX(1.067);font-weight:bold;">MASKS</div>
<div class="t" style="left:487.00px;top:102.64px;font-size:4.80px;color:#3a3a3a;transform:scaleX(1.025);font-weight:bold;">LAYERS</div>
<div class="t" style="left:512.00px;top:102.64px;font-size:4.80px;color:#5a5a5a;transform:scaleX(1.050);font-weight:bold;">CHANNELS</div>
<div class="t" style="left:547.00px;top:102.64px;font-size:4.80px;color:#5a5a5a;transform:scaleX(1.093);font-weight:bold;">PATHS</div>
<div class="t" style="left:489.00px;top:112.79px;font-size:6.86px;color:#333;transform:scaleX(0.792);-webkit-text-stroke:0;">Normal</div>
<div class="t" style="left:553.50px;top:113.52px;font-size:5.76px;color:#b8b8b8;transform:scaleX(0.804);">Opacity:</div>
<div class="t" style="left:576.00px;top:113.24px;font-size:6.45px;color:#2a2a2a;transform:scaleX(0.849);">100%</div>
<div class="t" style="left:486.50px;top:125.39px;font-size:5.21px;color:#b8b8b8;transform:scaleX(1.013);">Unify:</div>
<div class="t" style="left:556.00px;top:124.86px;font-size:5.49px;color:#b0b0b0;transform:scaleX(0.941);">Propagate Frame 1</div>
<div class="t" style="left:487.00px;top:137.39px;font-size:5.21px;color:#b8b8b8;transform:scaleX(1.043);">Lock:</div>
<div class="t" style="left:562.00px;top:137.39px;font-size:5.21px;color:#b8b8b8;transform:scaleX(1.172);">Fill:</div>
<div class="t" style="left:576.00px;top:136.74px;font-size:6.45px;color:#2a2a2a;transform:scaleX(0.849);">100%</div>
<div class="t" style="left:516.00px;top:152.81px;font-size:5.90px;color:#fff;transform:scaleX(0.874);font-style:italic;">Background</div>
<div class="t" style="left:28.00px;top:431.89px;font-size:5.21px;color:#fff;transform:scaleX(0.899);">0 sec.</div>
<div class="t" style="left:24.00px;top:408.36px;font-size:5.49px;color:#111;transform:scaleX(0.819);font-weight:bold;">1</div>
<div class="t" style="left:23.00px;top:438.82px;font-size:5.76px;color:#111;transform:scaleX(0.730);">Forever</div>
</body></html>
